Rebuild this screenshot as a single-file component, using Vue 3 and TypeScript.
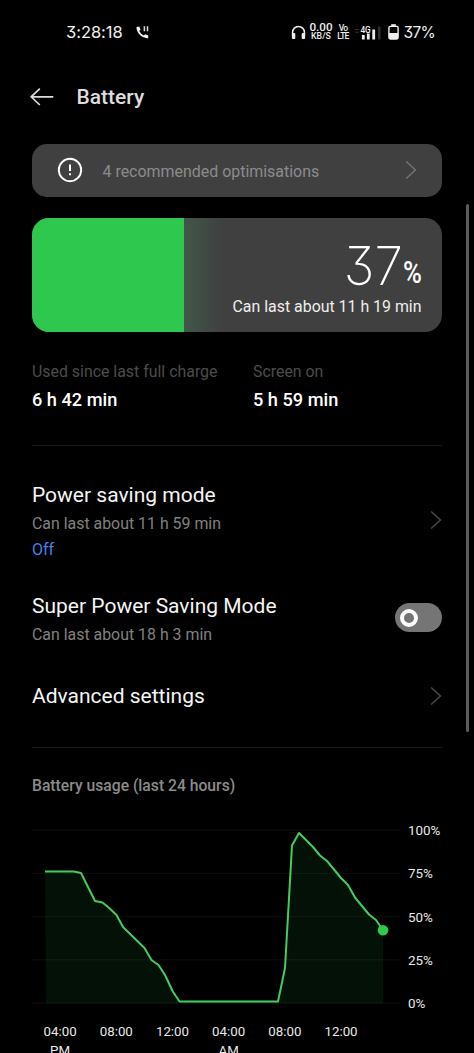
<script setup lang="ts">
interface Point {
  x: number
  y: number
}

const history: Point[] = [
  [45, 871.5], [74, 871.5], [81, 873], [95, 901], [102.5, 902.5], [110, 908.7],
  [116.5, 915], [123, 927], [144.5, 948], [151.5, 960], [158.5, 965], [165, 975],
  [172.5, 991], [179.5, 1001.5], [278, 1001.5], [285, 968], [292, 845.5], [299, 833],
  [306, 840], [313, 847], [320, 855.5], [327, 861], [341, 878], [348, 885],
  [355, 897.5], [369, 914.5], [376, 920], [383, 930.3],
].map(([x, y]) => ({ x: x - 32, y: y - 820 }))

const line = history.map((p) => `${p.x},${p.y}`).join(' ')
const last = history[history.length - 1]
const area = `14,183.5 ${line} ${last.x},183.5`

const gridLines = [10, 53.3, 96.6, 139.8, 183]
const percents = ['100%', '75%', '50%', '25%', '0%']
const hours = [
  { time: '04:00', period: 'PM' },
  { time: '08:00', period: '' },
  { time: '12:00', period: '' },
  { time: '04:00', period: 'AM' },
  { time: '08:00', period: '' },
  { time: '12:00', period: '' },
]
</script>

<template>
  <div class="screen">
    <div class="status">
      <span class="clock">3:28:18</span>
      <svg class="call" width="13" height="13" viewBox="0 0 13 13">
        <path d="M.5 1.1 3.3.6 4.5 3.7 3.2 5.1Q4.8 8.2 7.8 9.6L9.2 8.2 12.2 9.4V12.2Q8 12.8 4.2 9.3Q.3 5.5.5 1.1Z" fill="#f2f2f2" />
        <path d="M8.4.3V5.2M11.5.3V5.2" stroke="#ddd" stroke-width="1.5" />
      </svg>
      <div class="status-right">
        <svg class="phones" width="15" height="15" viewBox="0 0 15 15">
          <path d="M1.6 11V7.3a5.9 5.9 0 0 1 11.8 0V11" fill="none" stroke="#eee" stroke-width="1.5" />
          <rect x=".9" y="8" width="3.4" height="6" rx="1" fill="#eee" />
          <rect x="10.7" y="8" width="3.4" height="6" rx="1" fill="#eee" />
        </svg>
        <div class="speed"><b>0.00</b><i>KB/S</i></div>
        <div class="volte"><span>Vo</span><span>LTE</span></div>
        <svg class="signal" width="28" height="17" viewBox="0 0 28 17">
          <path d="M1 5.5h4M1 8.2h4" stroke="#333" stroke-width="1" />
          <path d="M9.3 15.5v-4.4M14.3 15.5V9.5M19.7 15.5V5.5" stroke="#eee" stroke-width="2.8" />
          <path d="M25.2 15.5V2.5" stroke="#2d2d2d" stroke-width="2.6" />
          <text x="6.4" y="8.5" fill="#eee" font-size="9.5" font-weight="500" textLength="10.4" lengthAdjust="spacingAndGlyphs">4G</text>
        </svg>
        <svg class="cell" width="11" height="16" viewBox="0 0 11 16">
          <path d="M3.2 1.2h4.6" stroke="#eee" stroke-width="2" />
          <rect x=".9" y="2.4" width="9.2" height="12.6" rx="1.4" fill="none" stroke="#eee" stroke-width="1.4" />
          <rect x="1" y="9" width="9" height="6" fill="#eee" />
        </svg>
        <span class="level">37%</span>
      </div>
    </div>

    <header class="header">
      <svg width="24" height="20" viewBox="0 0 24 20">
        <path d="M23.3 9.8H1.2M9.8 1.6 1.2 9.8 9.8 18" fill="none" stroke="#dcdcdc" stroke-width="1.7" />
      </svg>
      <h1>Battery</h1>
    </header>

    <main class="content">
      <section class="tip">
        <svg width="26" height="26" viewBox="0 0 26 26">
          <circle cx="13" cy="13" r="11.2" fill="none" stroke="#fff" stroke-width="1.9" />
          <path d="M13 7.5v6.6M13 16.3v2" stroke="#fff" stroke-width="2" />
        </svg>
        <span class="tip-text">4 recommended optimisations</span>
        <svg class="chevron light" width="12" height="20" viewBox="0 0 12 20"><path d="M1.2 1.5 10.4 10l-9.2 8.5" /></svg>
      </section>

      <section class="charge">
        <div class="fill"></div>
        <div class="charge-info">
          <div class="big"><span class="num">37</span><span class="pct">%</span></div>
          <div class="remain">Can last about 11 h 19 min</div>
        </div>
      </section>

      <section class="stats">
        <div class="stat"><span class="label">Used since last full charge</span><strong>6 h 42 min</strong></div>
        <div class="stat"><span class="label">Screen on</span><strong>5 h 59 min</strong></div>
      </section>

      <section class="settings">
        <div class="row mode">
          <div>
            <h2>Power saving mode</h2>
            <p>Can last about 11 h 59 min</p>
            <p class="off">Off</p>
          </div>
          <svg class="chevron" width="12" height="20" viewBox="0 0 12 20"><path d="M1.2 1.5 10.4 10l-9.2 8.5" /></svg>
        </div>
        <div class="row super">
          <div>
            <h2>Super Power Saving Mode</h2>
            <p>Can last about 18 h 3 min</p>
          </div>
          <div class="toggle"><span class="knob"></span></div>
        </div>
        <div class="row advanced">
          <h2>Advanced settings</h2>
          <svg class="chevron" width="12" height="20" viewBox="0 0 12 20"><path d="M1.2 1.5 10.4 10l-9.2 8.5" /></svg>
        </div>
      </section>

      <section class="usage">
        <h3>Battery usage (last 24 hours)</h3>
        <div class="chart">
          <svg width="368" height="190" viewBox="0 0 368 190">
            <path v-for="y in gridLines" :key="y" :d="`M0 ${y}H368`" stroke="#0e0e0e" stroke-width="1" />
            <polygon :points="area" fill="#2dc84d" fill-opacity=".085" />
            <polyline :points="line" fill="none" stroke="#45cb61" stroke-width="2" stroke-linejoin="round" />
            <circle :cx="last.x" :cy="last.y" r="5.3" fill="#2dc84d" />
          </svg>
          <div class="scale"><span v-for="p in percents" :key="p">{{ p }}</span></div>
        </div>
        <div class="hours">
          <div v-for="(h, i) in hours" :key="i" class="hour"><span>{{ h.time }}</span><span>{{ h.period }}</span></div>
        </div>
      </section>
    </main>
    <div class="scrollbar"></div>
  </div>
</template>

<style>
html, body { background: #000; overflow: hidden; }
</style>

<style scoped>
* { box-sizing: border-box; }
.screen { position: relative; width: 474px; height: 1053px; overflow: hidden; background: #000; color: #fff; font-family: Roboto, "Liberation Sans", sans-serif; white-space: nowrap; }
h1, h2, h3, p { margin: 0; font-weight: 400; }
svg { display: block; flex: none; }
.status { display: flex; align-items: center; height: 64px; padding: 0 40px 0 66px; }
.clock { width: 70px; font-family: Inter, sans-serif; font-feature-settings: "cv09"; font-size: 16.5px; letter-spacing: -.05px; line-height: 20px; color: #f0f0f0; }
.status-right { display: flex; align-items: center; margin-left: auto; color: #eee; }
.speed { display: flex; flex-direction: column; align-items: center; width: 24px; margin-left: 3px; }
.speed b { font-size: 11.7px; line-height: 9px; font-weight: 500; }
.speed i { font-size: 8.8px; line-height: 9px; font-style: normal; font-weight: 500; }
.volte { display: flex; flex-direction: column; align-items: center; width: 12px; margin-left: 4px; font-size: 8.5px; line-height: 8px; font-weight: 500; letter-spacing: -.7px; }
.signal { margin: 0 6px 0 5px; }
.level { width: 30.5px; margin-left: 4.5px; font-family: Inter, sans-serif; font-feature-settings: "cv09"; font-size: 15.5px; letter-spacing: -.7px; }
.header { display: flex; align-items: center; height: 66px; padding-left: 30px; }
.header h1 { margin-left: 22.5px; font-size: 21px; font-weight: 500; line-height: 26px; color: #ddd; }
.content { padding: 13.5px 32px 0; }
.tip { display: flex; align-items: center; height: 53px; padding: 0 25px; border-radius: 15px; background: #404040; }
.tip-text { margin-left: 19.5px; padding-top: 2px; font-size: 15.95px; color: #8c8c8c; }
.chevron { fill: none; stroke: #484848; stroke-width: 1.5; margin-left: auto; }
.chevron.light { stroke: #727272; }
.charge { display: flex; height: 114.5px; margin-top: 21px; border-radius: 17px; overflow: hidden; background: #404040; }
.fill { width: 152px; background: #2dc84d; }
.charge-info { flex: 1; padding: 23px 20.5px 0 0; text-align: right; background: linear-gradient(90deg, #40584a 0, #40404000 38px); }
.big { display: flex; justify-content: flex-end; align-items: baseline; height: 54px; line-height: 50px; }
.num { font-family: Inter, sans-serif; font-feature-settings: "cv09"; font-weight: 250; font-size: 53px; transform: scaleX(.97); transform-origin: right; }
.pct { font-size: 32px; font-weight: 500; width: 19px; transform: translateY(-2px) scaleX(.8); transform-origin: left; }
.remain { font-size: 15.9px; line-height: 24px; color: #eee; }
.stats { display: grid; grid-template-columns: 221px 1fr; height: 114px; padding-top: 28px; border-bottom: 1px solid #1a1a1a; }
.stat { display: flex; flex-direction: column; }
.label { font-size: 15.9px; line-height: 24px; color: #4c4c4c; }
.stat strong { margin-top: 3px; font-size: 18.2px; font-weight: 500; line-height: 26px; }
.settings { height: 302px; padding-top: 19px; border-bottom: 1px solid #1a1a1a; }
.row { display: flex; align-items: center; justify-content: space-between; }
.row h2 { font-size: 21px; line-height: 30px; color: #f5f5f5; }
.row p { font-size: 15.9px; line-height: 26px; color: #808080; }
.row p.off { color: #4b7fea; }
.mode { height: 110px; padding-top: 3px; }
.mode h2, .super h2 { margin: -1px 0 1px; }
.mode .chevron { margin-top: -3px; }
.super { height: 85px; }
.super > div:first-child { padding-top: 4px; }
.advanced { height: 72px; }
.toggle { display: flex; align-items: center; width: 47px; height: 29px; padding-left: 5px; border-radius: 15px; background: #757575; }
.knob { width: 18px; height: 18px; border: 4px solid #fff; border-radius: 50%; }
.usage { padding-top: 26px; }
.usage h3 { font-size: 15.7px; line-height: 24px; font-weight: 500; color: #8b8b8b; }
.chart { display: flex; margin-top: 22px; height: 190px; }
.scale { display: flex; flex-direction: column; margin: -11px 0 0 8px; font-size: 13.4px; line-height: 43.3px; color: #e8e8e8; }
.hours { display: flex; width: 338px; color: #e8e8e8; font-size: 13.3px; line-height: 19px; margin-top: 12px; }
.hour { display: flex; flex-direction: column; align-items: center; width: 56.2px; flex: none; }
.scrollbar { position: absolute; right: 5px; top: 204px; width: 3px; height: 528px; border-radius: 2px; background: #5c5c5c; }
</style>
